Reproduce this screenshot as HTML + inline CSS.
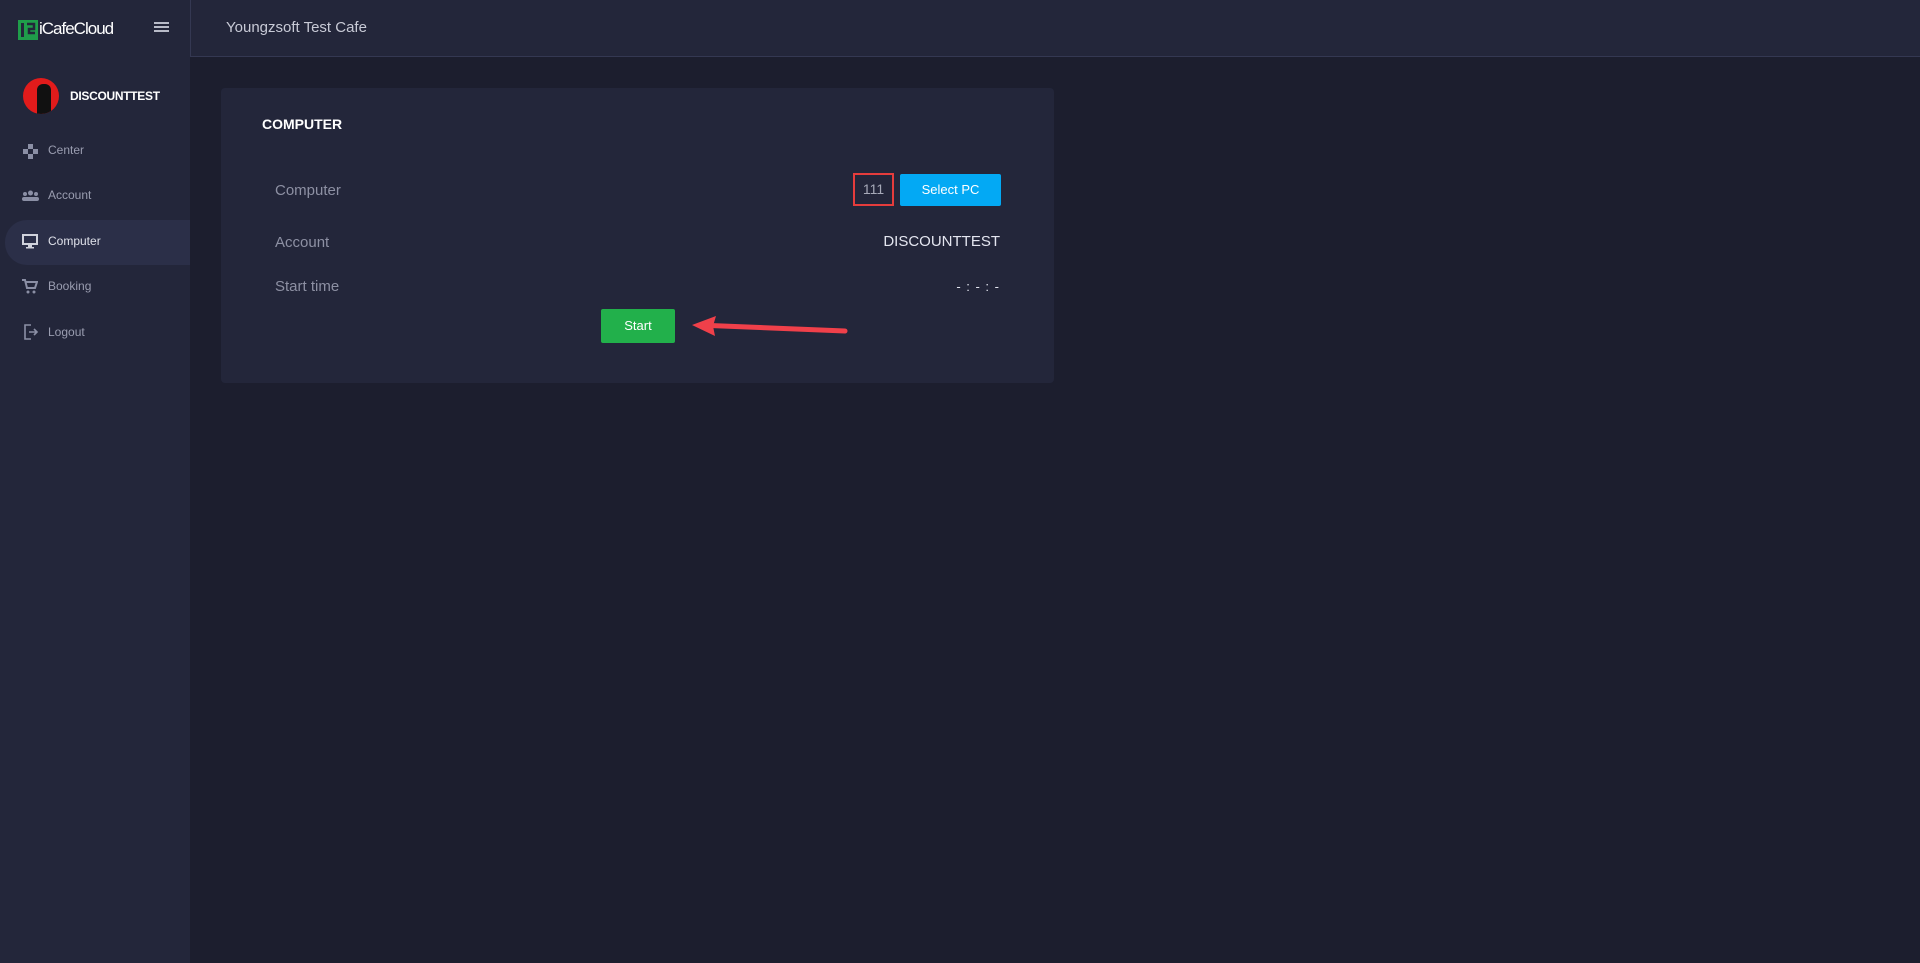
<!DOCTYPE html>
<html><head><meta charset="utf-8"><style>
*{margin:0;padding:0;box-sizing:border-box}
body{width:1920px;height:963px;background:#1c1e2e;font-family:"Liberation Sans",sans-serif;position:relative;overflow:hidden}
.side{position:absolute;left:0;top:0;width:190px;height:963px;background:#23263a}
.head{position:absolute;left:190px;top:0;right:0;height:57px;background:#23263a;border-bottom:1px solid #343852;border-left:1px solid #343852}
.abs{position:absolute}
.menu{position:absolute;left:48px;font-size:12px;color:#9a9db0}
.card{position:absolute;left:221px;top:88px;width:833px;height:295px;background:#23263a;border-radius:4px}
.lbl{position:absolute;left:275px;font-size:15px;color:#8d90a3}
</style></head><body>
<div class="side"></div>
<div class="head"><div class="abs" style="left:35px;top:19px;font-size:15px;color:#c8cad6">Youngzsoft Test Cafe</div></div>
<svg class="abs" style="left:18px;top:20px" width="20" height="20" viewBox="0 0 20 20"><rect width="20" height="20" fill="#1f9d4a"/><rect x="3" y="3" width="3" height="14" fill="#23263a"/><path d="M9 4h7v5h-5v4h6" stroke="#23263a" stroke-width="2.5" fill="none"/></svg>
<div class="abs" style="left:39px;top:19px;font-size:17px;color:#fff;letter-spacing:-1px">iCafeCloud</div>
<div class="abs" style="left:154px;top:22px;width:15px;height:2px;background:#b8bbc8;box-shadow:0 4px 0 #b8bbc8,0 8px 0 #b8bbc8"></div>
<div class="abs" style="left:23px;top:78px;width:36px;height:36px;border-radius:50%;background:#e21b1b;overflow:hidden"><div style="position:absolute;left:14px;top:6px;width:14px;height:30px;background:#111;border-radius:6px 6px 0 0"></div></div>
<div class="abs" style="left:70px;top:89px;font-size:12px;font-weight:bold;color:#fff;letter-spacing:-.3px">DISCOUNTTEST</div>
<div class="abs" style="left:5px;top:220px;width:185px;height:45px;background:#2b2f48;border-radius:22px 0 0 22px"></div>
<svg class="abs" style="left:23px;top:144px" width="15" height="15"><rect x="5" y="0" width="5" height="5" fill="#8b8fa5"/><rect x="0" y="5" width="5" height="5" fill="#8b8fa5"/><rect x="10" y="5" width="5" height="5" fill="#8b8fa5"/><rect x="5" y="10" width="5" height="5" fill="#8b8fa5"/></svg>
<div class="menu" style="top:143px">Center</div>
<svg class="abs" style="left:22px;top:190px" width="17" height="11"><circle cx="8.5" cy="3" r="2.5" fill="#8b8fa5"/><circle cx="3" cy="4" r="2" fill="#8b8fa5"/><circle cx="14" cy="4" r="2" fill="#8b8fa5"/><rect x="0" y="7" width="17" height="4" rx="2" fill="#8b8fa5"/></svg>
<div class="menu" style="top:188px">Account</div>
<svg class="abs" style="left:22px;top:234px" width="16" height="15"><rect x="1" y="1" width="14" height="9" fill="none" stroke="#d0d2dc" stroke-width="2"/><rect x="6" y="11" width="4" height="2" fill="#d0d2dc"/><rect x="4" y="13" width="8" height="1.5" fill="#d0d2dc"/></svg>
<div class="menu" style="top:234px;color:#dfe1ea">Computer</div>
<svg class="abs" style="left:22px;top:279px" width="16" height="15"><path d="M0 1h3l2 8h8l2-6H4" fill="none" stroke="#8b8fa5" stroke-width="2"/><circle cx="6" cy="13" r="1.5" fill="#8b8fa5"/><circle cx="12" cy="13" r="1.5" fill="#8b8fa5"/></svg>
<div class="menu" style="top:279px">Booking</div>
<svg class="abs" style="left:24px;top:324px" width="15" height="16"><path d="M7 1H1v14h6" fill="none" stroke="#8b8fa5" stroke-width="1.6"/><path d="M5 8h8M10 5l3 3-3 3" fill="none" stroke="#8b8fa5" stroke-width="1.6"/></svg>
<div class="menu" style="top:325px">Logout</div>
<div class="card"></div>
<div class="abs" style="left:262px;top:116px;font-size:14px;font-weight:bold;color:#fff">COMPUTER</div>
<div class="lbl" style="top:182px">Computer</div>
<div class="lbl" style="top:234px">Account</div>
<div class="lbl" style="top:278px">Start time</div>
<div class="abs" style="left:853px;top:173px;width:41px;height:33px;border:2px solid #e53c3c;color:#a6a9b8;font-size:14px;text-align:center;line-height:29px">111</div>
<div class="abs" style="left:900px;top:174px;width:101px;height:32px;background:#03a9f4;border-radius:2px;color:#fff;font-size:13px;text-align:center;line-height:32px">Select PC</div>
<div class="abs" style="right:920px;top:233px;font-size:15px;color:#e4e6f0">DISCOUNTTEST</div>
<div class="abs" style="right:920px;top:279px;font-size:13px;color:#e4e6f0;letter-spacing:1px">- : - : -</div>
<div class="abs" style="left:601px;top:309px;width:74px;height:34px;background:#22b04b;border-radius:2px;color:#fff;font-size:13px;text-align:center;line-height:34px">Start</div>
<svg class="abs" style="left:680px;top:310px" width="180" height="30"><path d="M30 15.5L165 21" stroke="#f0404a" stroke-width="5" stroke-linecap="round"/><path d="M12 15L36 6l-3 10 2 10z" fill="#f0404a"/></svg>
</body></html>
